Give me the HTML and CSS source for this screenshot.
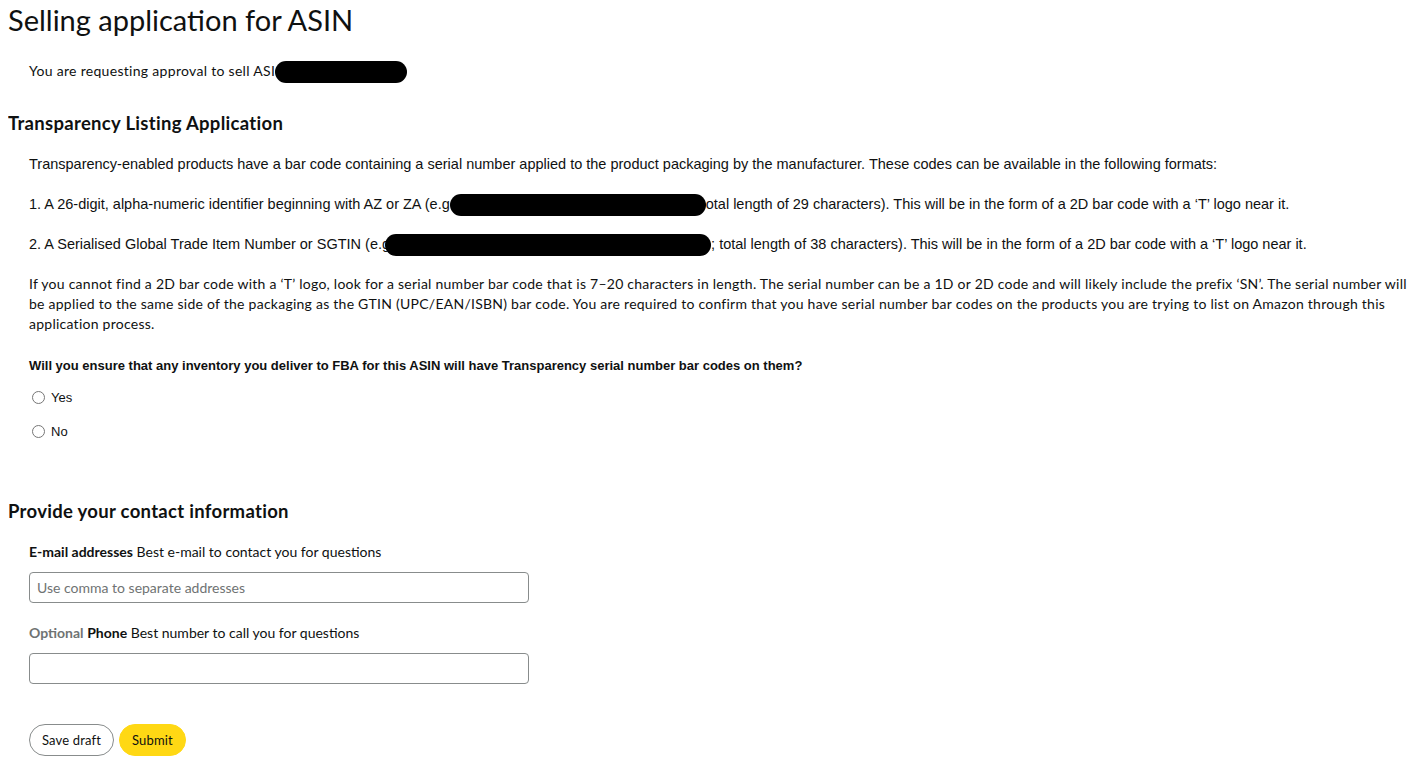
FILE: index.html
```html
<!DOCTYPE html>
<html lang="en">
<head>
  <meta charset="UTF-8"/>
  <title>Selling application for ASIN</title>
  <link rel="stylesheet" href="styles.css">
</head>
<body>
  <h1 class="page-title">Selling application for ASIN</h1>

  <p class="intro">You are requesting approval to sell ASI<span class="redact redact-asin"></span></p>

  <!-- Transparency -->
  <h2 class="section-title">Transparency Listing Application</h2>
  <div class="section-body">
    <p class="narrow">Transparency-enabled products have a bar code containing a serial number applied to the product packaging by the manufacturer. These codes can be available in the following formats:</p>
    <p class="narrow">1. A 26-digit, alpha-numeric identifier beginning with AZ or ZA (e.g<span class="redact redact-az"></span>otal length of 29 characters). This will be in the form of a 2D bar code with a ‘T’ logo near it.</p>
    <p class="narrow">2. A Serialised Global Trade Item Number or SGTIN (e.g.<span class="redact redact-sgtin"></span>; total length of 38 characters). This will be in the form of a 2D bar code with a ‘T’ logo near it.</p>
    <p class="regular">If you cannot find a 2D bar code with a ‘T’ logo, look for a serial number bar code that is 7–20 characters in length. The serial number can be a 1D or 2D code and will likely include the prefix ‘SN’. The serial number will be applied to the same side of the packaging as the GTIN (UPC/EAN/ISBN) bar code. You are required to confirm that you have serial number bar codes on the products you are trying to list on Amazon through this application process.</p>

    <p class="question">Will you ensure that any inventory you deliver to FBA for this ASIN will have Transparency serial number bar codes on them?</p>
    <label class="radio"><input type="radio" name="fba"> Yes</label>
    <label class="radio"><input type="radio" name="fba"> No</label>
  </div>

  <!-- Contact -->
  <h2 class="section-title contact-title">Provide your contact information</h2>
  <div class="section-body">
    <div class="field">
      <div class="field-label"><b>E-mail addresses</b> Best e-mail to contact you for questions</div>
      <input type="text" class="text-input" placeholder="Use comma to separate addresses">
    </div>
    <div class="field">
      <div class="field-label"><span class="optional">Optional</span> <b>Phone</b> Best number to call you for questions</div>
      <input type="text" class="text-input">
    </div>
    <div class="actions">
      <button class="btn btn-draft">Save draft</button>
      <button class="btn btn-submit">Submit</button>
    </div>
  </div>
</body>
</html>
```

FILE: styles.css
```css
body{
  margin: 0 8px;
  font-family: Lato, 'Liberation Sans', sans-serif;
  color: #0f1111;
  background: #fff;
}
.page-title{
  font-size: 29px;
  font-weight: 400;
  line-height: 40px;
  margin: 0;
}
.intro{
  font-size: 14px;
  line-height: 20px;
  letter-spacing: 0.3px;
  margin: 21px 0 0 21px;
}
.redact{
  display: inline-block;
  background: #000;
  border-radius: 12px;
  height: 22px;
  margin: -3px 0;
  vertical-align: middle;
}
.redact-asin{ width: 132px; }
.redact-az{ width: 256px; }
.redact-sgtin{
  width: 326px;
  margin-left: -9px;
}
.section-title{
  font-size: 18.5px;
  font-weight: 700;
  letter-spacing: 0.3px;
  line-height: 24px;
  margin: 30px 0 0;
}
.section-body{
  padding-left: 21px;
}
.section-body p{
  margin: 20px 0 0;
  font-size: 14px;
  line-height: 20px;
}
.section-body p:first-child{
  margin-top: 19px;
}
.narrow{
  font-family: 'Liberation Sans', Arial, sans-serif;
  font-size: 14.5px !important;
}
.regular{
  letter-spacing: 0.25px;
}
.question{
  font-family: 'Liberation Sans', Arial, sans-serif;
  font-weight: 700;
  font-size: 13px !important;
  margin-top: 22px !important;
}
.radio{
  display: flex;
  align-items: center;
  gap: 6px;
  font-family: 'Liberation Sans', Arial, sans-serif;
  font-size: 13px;
  margin-top: 11px;
  height: 20px;
}
.radio + .radio{
  margin-top: 14px;
}
.radio input{
  margin: 0 0 0 3px;
  width: 13px;
  height: 13px;
}
.contact-title{
  margin-top: 58px;
}
.field{
  margin-top: 19px;
}
.field + .field{
  margin-top: 20px;
}
.field-label{
  font-size: 14px;
  line-height: 20px;
}
.optional{
  color: #6f7373;
  font-weight: 700;
}
.text-input{
  display: block;
  box-sizing: border-box;
  width: 500px;
  height: 31px;
  margin-top: 10px;
  padding: 0 7px;
  border: 1px solid #888c8c;
  border-radius: 4px;
  font-family: inherit;
  font-size: 14px;
  color: #0f1111;
}
.text-input::placeholder{
  color: #6f7373;
}
.actions{
  display: flex;
  gap: 5px;
  margin-top: 40px;
}
.btn{
  height: 32px;
  padding: 0 12px;
  border-radius: 100px;
  font-family: inherit;
  font-size: 13px;
  letter-spacing: 0.15px;
  color: #0f1111;
  cursor: pointer;
}
.btn-draft{
  background: #fff;
  border: 1px solid #888c8c;
}
.btn-submit{
  background: #ffd814;
  border: 1px solid #ffd814;
}
```
